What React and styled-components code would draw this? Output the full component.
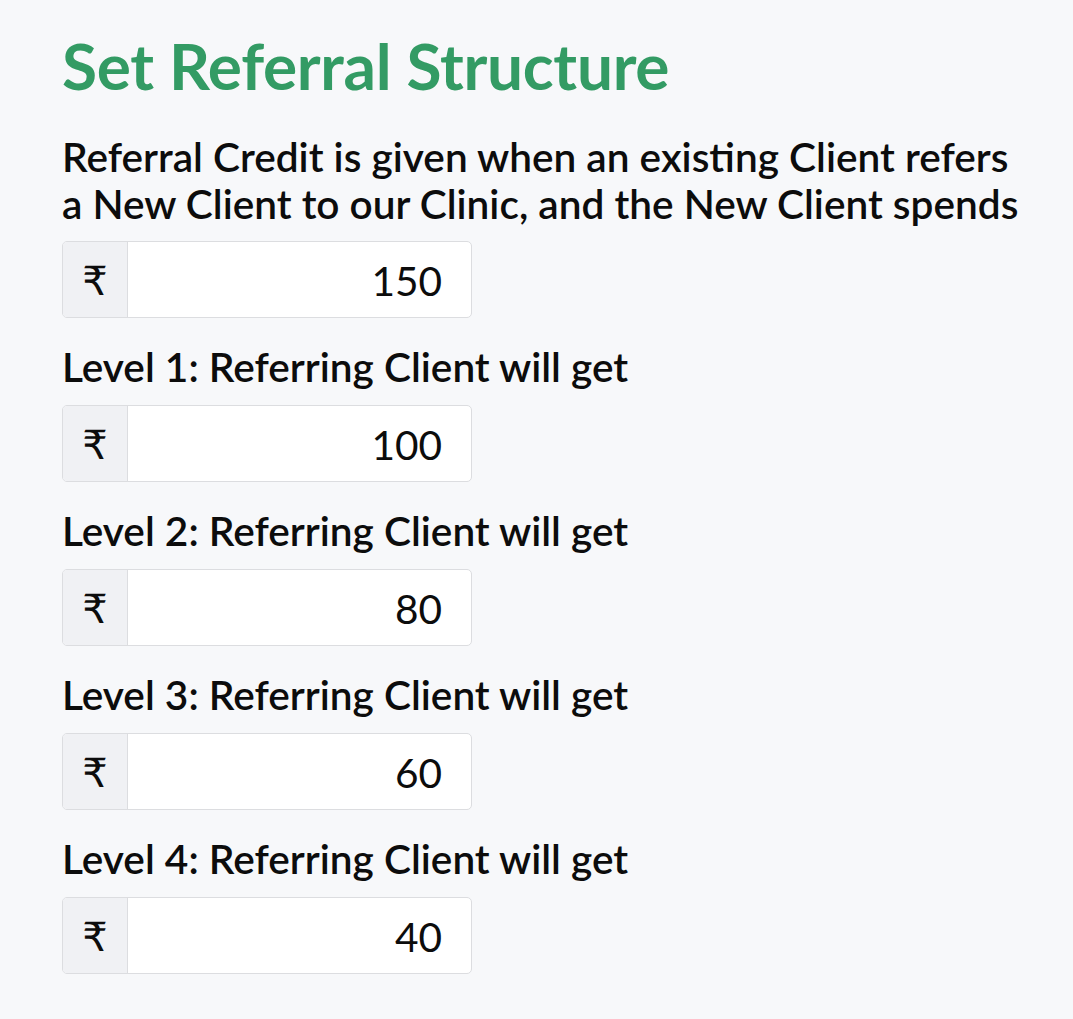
import React from 'react';
import styled, { createGlobalStyle } from 'styled-components';

const GlobalStyle = createGlobalStyle`
  html, body {
    margin: 0;
    padding: 0;
    background: #f7f8fa;
  }
  body {
    font-family: Lato, "Open Sans", sans-serif;
    color: #0c0c0c;
  }
`

const Page = styled.div`
  padding: 24px 0 40px 62px;
  min-height: 1019px;
  box-sizing: border-box;
`
const Title = styled.h1`
  margin: 0;
  font-size: 64px;
  line-height: 84px;
  font-weight: 700;
  color: #339b64;
  letter-spacing: -0.3px;
`
const Intro = styled.p`
  margin: 25px 0 14px 0;
  font-size: 40.6px;
  line-height: 47px;
  font-weight: 600;
  max-width: 962px;
`
const Label = styled.div`
  margin: 27px 0 16px 0;
  font-size: 40.6px;
  line-height: 44px;
  font-weight: 600;
`
const InputGroup = styled.div`
  display: flex;
  width: 410px;
  height: 77px;
  box-sizing: border-box;
  border: 1px solid #dcdde0;
  border-radius: 5px;
  background: #fff;
  overflow: hidden;
`
const Addon = styled.span`
  width: 65px;
  flex: none;
  display: flex;
  align-items: center;
  justify-content: center;
  background: #f0f1f4;
  border-right: 1px solid #dcdde0;
  font-family: "DejaVu Sans", "Noto Sans", sans-serif;
  font-size: 40px;
  padding-top: 2px;
  box-sizing: border-box;
  color: #0c0c0c;
`
const Amount = styled.input`
  flex: 1;
  min-width: 0;
  border: none;
  outline: none;
  background: transparent;
  text-align: right;
  padding: 2px 29px 0 10px;
  font-family: Lato, "Open Sans", sans-serif;
  font-size: 40.6px;
  font-weight: 400;
  color: #0c0c0c;
`

const levels = [
  { label: 'Level 1: Referring Client will get', value: '100' },
  { label: 'Level 2: Referring Client will get', value: '80' },
  { label: 'Level 3: Referring Client will get', value: '60' },
  { label: 'Level 4: Referring Client will get', value: '40' },
];

const MoneyInput = ({ value }) => (
  <InputGroup>
    <Addon>₹</Addon>
    <Amount type="text" defaultValue={value} />
  </InputGroup>
)

export default () => {
  return (
    <Page>
      <GlobalStyle />
      <Title>Set Referral Structure</Title>
      <Intro>
        Referral Credit is given when an existing Client refers a New Client to our Clinic, and the New Client spends
      </Intro>
      <MoneyInput value="150" />
      {levels.map(l => (
        <React.Fragment key={l.label}>
          <Label>{l.label}</Label>
          <MoneyInput value={l.value} />
        </React.Fragment>
      ))}
    </Page>
  )
}
